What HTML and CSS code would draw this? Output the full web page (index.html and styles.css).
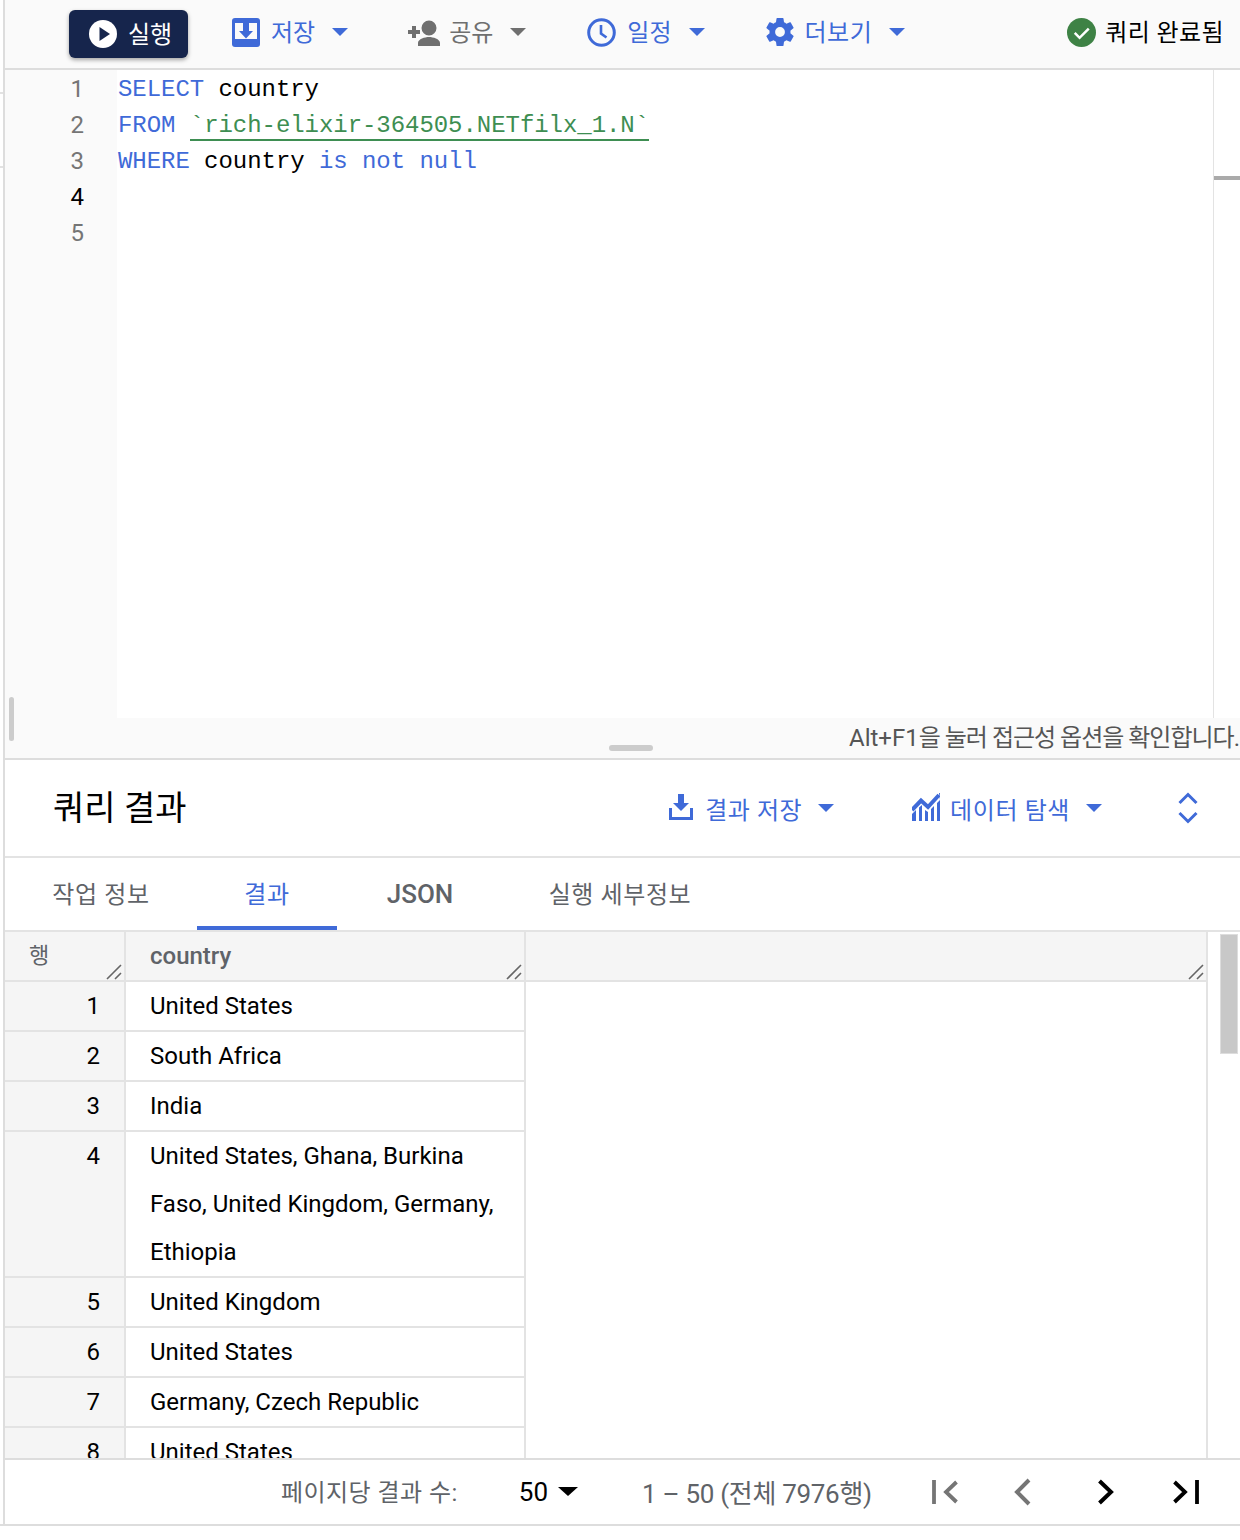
FILE: index.html
```html
<!DOCTYPE html>
<html lang="ko">
<head>
<meta charset="utf-8">
<title>쿼리 결과</title>
<link rel="stylesheet" href="styles.css">
</head>
<body>
<div class="page">
  <div class="rail"><i></i><i></i></div>
  <div class="app">
    <header class="toolbar">
      <button class="run"><svg class="ic30" viewBox="0 0 30 30"><circle cx="15" cy="15" r="14" fill="#fff"/><path d="M11.500 8 22 15l-10.500 7z" fill="#16254c"/></svg><span>실행</span></button>
      <div class="tool t-save"><svg class="ic-save" viewBox="0 0 28 29"><rect width="28" height="29" rx="3" fill="#3f6ad8"/><rect x="3" y="5" width="22" height="16" fill="#fafafa"/><path fill="#3f6ad8" d="M11 0h6v13h4l-7 7.500L7 13h4z"/></svg><span>저장</span><i class="caret"></i></div>
      <div class="tool grey t-share"><svg class="ic-share" viewBox="0 0 33 27"><path fill="#6f6f6f" d="M21 16.500a7.500 7.500 0 1 0 0-15 7.500 7.500 0 0 0 0 15zM21 18c-4 0-11 2-11 6v3h22v-3c0-4-7-6-11-6zM4 7v4H0v4h4v4h4v-4h4v-4H8V7z"/></svg><span>공유</span><i class="caret"></i></div>
      <div class="tool t-sched"><svg class="ic-clock" viewBox="0 0 29 29"><circle cx="14.500" cy="14.500" r="12.800" fill="none" stroke="#3f6ad8" stroke-width="3"/><path d="M14 7v8.500l5.500 4" fill="none" stroke="#3f6ad8" stroke-width="2.600"/></svg><span>일정</span><i class="caret"></i></div>
      <div class="tool t-more"><svg class="ic-gear" viewBox="2 2 20 20"><path fill="#3f6ad8" d="M19.430 12.980c.04-.32.07-.64.07-.98s-.03-.66-.07-.98l2.110-1.650c.19-.15.24-.42.12-.64l-2-3.460c-.12-.22-.39-.3-.61-.22l-2.490 1c-.52-.4-1.080-.73-1.690-.98l-.38-2.650A.49.490 0 0 0 14 2h-4c-.25 0-.46.180-.49.420l-.38 2.650c-.61.250-1.170.590-1.690.980l-2.490-1c-.23-.09-.49 0-.61.220l-2 3.460c-.13.220-.07.490.12.640l2.110 1.650c-.04.320-.07.650-.07.980s.03.660.07.980l-2.110 1.650c-.19.150-.24.420-.12.640l2 3.460c.12.220.39.300.61.220l2.490-1c.52.400 1.080.730 1.690.980l.38 2.650c.03.240.24.420.49.420h4c.25 0 .46-.180.49-.420l.38-2.650c.61-.250 1.170-.590 1.690-.980l2.490 1c.23.090.49 0 .61-.220l2-3.460c.12-.220.07-.490-.12-.640zM12 15.500a3.500 3.500 0 1 1 0-7 3.500 3.500 0 0 1 0 7z"/></svg><span>더보기</span><i class="caret"></i></div>
      <div class="status"><svg class="ic-clock" viewBox="0 0 30 30"><circle cx="15" cy="15" r="15" fill="#3e8245"/><path d="M8 15.500l5 5L22.500 11" fill="none" stroke="#fff" stroke-width="2.600"/></svg><span>쿼리 완료됨</span></div>
    </header>

    <section class="editor">
      <div class="gutter"><div>1</div><div>2</div><div>3</div><div class="cur">4</div><div>5</div><i class="vthumb"></i></div>
      <div class="code">
        <div class="ln"><b>SELECT</b> country</div>
        <div class="ln"><b>FROM</b> <span class="str">`rich-elixir-364505.NETfilx_1.N`</span></div>
        <div class="ln"><b>WHERE</b> country <b>is not null</b></div>
      </div>
      <div class="minimap"><i></i></div>
    </section>
    <div class="hint"><i class="hthumb"></i><span>Alt+F1<span class="tight">을 눌러 접근성 옵션을 확인합니다.</span></span></div>

    <div class="res-head">
      <h2>쿼리 결과</h2>
      <div class="act a-save"><svg class="ic-dl" viewBox="0 0 24 26"><path fill="#3f6ad8" d="M9 0h6v9h5l-8 8-8-8h5zM0 14h3v9h18v-9h3v12H0z"/></svg><span>결과 저장</span><i class="caret"></i></div>
      <div class="act a-explore"><svg class="ic-chart" viewBox="0 0 28 28"><path d="M0 17 9 7.500l7 6.500L27 2" fill="none" stroke="#3f6ad8" stroke-width="4"/><path fill="#3f6ad8" d="M27 0h1v7zM0 21l4-4v11H0zM7 14.500l3-2.500V28H7zM13 17l3 2v9h-3zM19 16l3-3v15h-3zM25 10l3-3v21h-3z"/></svg><span>데이터 탐색</span><i class="caret"></i></div>
      <svg class="unfold" viewBox="0 0 22 32"><path d="M2.500 11 11 2.500 19.500 11M2.500 21l8.500 8.500L19.500 21" fill="none" stroke="#3f6ad8" stroke-width="3"/></svg>
    </div>

    <nav class="tabs">
      <div class="tab t1">작업 정보</div>
      <div class="tab t2 on">결과</div>
      <div class="tab t3 strong">JSON</div>
      <div class="tab t4">실행 세부정보</div>
    </nav>

    <div class="results">
      <div class="grid">
        <div class="row hdr">
          <div class="num">행<svg class="grip" viewBox="0 0 16 16"><path d="M1 15 15 1M9 15l6-6"/></svg></div>
          <div class="val">country<svg class="grip" viewBox="0 0 16 16"><path d="M1 15 15 1M9 15l6-6"/></svg></div>
          <div class="rest"><svg class="grip" viewBox="0 0 16 16"><path d="M1 15 15 1M9 15l6-6"/></svg></div>
        </div>
        <div class="row"><div class="num">1</div><div class="val">United States</div></div>
        <div class="row"><div class="num">2</div><div class="val">South Africa</div></div>
        <div class="row"><div class="num">3</div><div class="val">India</div></div>
        <div class="row"><div class="num">4</div><div class="val">United States, Ghana, Burkina Faso, United Kingdom, Germany, Ethiopia</div></div>
        <div class="row"><div class="num">5</div><div class="val">United Kingdom</div></div>
        <div class="row"><div class="num">6</div><div class="val">United States</div></div>
        <div class="row"><div class="num">7</div><div class="val">Germany, Czech Republic</div></div>
        <div class="row"><div class="num">8</div><div class="val">United States</div></div>
      </div>
      <div class="sb"><i></i></div>
    </div>

    <footer class="pager">
      <span class="lbl">페이지당 결과 수:</span>
      <span class="size">50</span><i class="caret dark"></i>
      <span class="range">1 – 50 (전체 7976행)</span>
      <svg class="p1" viewBox="0 0 26 24"><path d="M2 0v24M24.500 2 14 12l10.500 10" stroke="#757575" stroke-width="3.800" fill="none"/></svg>
      <svg class="p2" viewBox="0 0 18 28"><path d="M16 2 4 14l12 12" stroke="#757575" stroke-width="4" fill="none"/></svg>
      <svg class="p3" viewBox="0 0 18 26"><path d="M2.500 2 14 13 2.500 24" stroke="#000" stroke-width="4" fill="none"/></svg>
      <svg class="p4" viewBox="0 0 26 24"><path d="M1.500 2 12 12 1.500 22M24 0v24" stroke="#000" stroke-width="3.800" fill="none"/></svg>
    </footer>
  </div>
</div>
</body>
</html>
```
FILE: styles.css
```css
* { box-sizing: border-box; }
html, body { margin: 0; padding: 0; background: #fff; }
body { font-family: Roboto, "Noto Sans CJK KR", sans-serif; font-size: 24px; color: #000; }
i { display: block; }
button { font: inherit; }

.page { width: 1240px; height: 1526px; border-bottom: 2px solid #ddd; overflow: hidden; display: flex; }
.rail { width: 3px; flex: none; padding-top: 92px; }
.rail i { height: 2px; background: #e2e2e2; margin-bottom: 72px; }
.app { flex: 1; min-width: 0; height: 1524px; border-left: 2px solid #ddd; display: flex; flex-direction: column; }

.toolbar { height: 70px; flex: none; background: #fafafa; border-bottom: 2px solid #ddd; display: flex; align-items: center; padding: 0 17px 4px 64px; color: #3f6ad8; }
.ic30 { width: 30px; height: 30px; flex: none; display: block; }
.ic-save { width: 28px; height: 29px; flex: none; display: block; }
.ic-share { width: 33px; height: 27px; flex: none; display: block; }
.ic-clock { width: 29px; height: 29px; flex: none; display: block; }
.ic-gear { width: 28px; height: 28px; flex: none; display: block; }
.run { width: 119px; height: 48px; background: #16254c; color: #fff; border: 0; border-radius: 6px; display: flex; align-items: center; gap: 10px; padding: 0 0 0 19px; box-shadow: 0 2px 4px rgba(0,0,0,.35); margin-top: 4px; }
.run span { padding-bottom: 3px; }
.tool { display: flex; align-items: center; gap: 11px; }
.tool span { padding-bottom: 4px; }
.tool .caret { margin-left: 6px; margin-bottom: 1px; }
.grey { color: #6f6f6f; }
.caret { width: 0; height: 0; border-left: 8px solid transparent; border-right: 8px solid transparent; border-top: 8px solid #3f6ad8; flex: none; }
.grey .caret { border-top-color: #6f6f6f; }
.t-save { margin-left: 44px; }
.t-share { margin-left: 60px; gap: 8px; }
.t-share .caret { margin-left: 9px; }
.t-sched { margin-left: 61px; }
.t-more { margin-left: 61px; }
.t-more span { letter-spacing: .5px; }
.status { margin-left: auto; display: flex; align-items: center; gap: 9px; color: #000; }
.status span { padding-bottom: 4px; letter-spacing: .4px; margin-right: -1px; }

.editor { height: 648px; flex: none; display: flex; background: #fff; }
.gutter { width: 112px; flex: none; background: #fafafa; color: #757575; font-size: 24px; line-height: 36px; padding-top: 1px; padding-right: 33px; text-align: right; position: relative; }
.gutter .cur { color: #000; }
.vthumb { position: absolute; left: 4px; top: 627px; width: 5px; height: 44px; background: #ccc; border-radius: 3px; z-index: 1; }
.code { flex: 1; padding: 2px 0 0 1px; font-family: "Liberation Mono", monospace; font-size: 24px; line-height: 36px; letter-spacing: -0.05px; }
.ln { white-space: pre; height: 36px; }
.code b { font-weight: 400; color: #3f6ad8; }
.str { display: inline-block; line-height: 27px; color: #3e8e52; border-bottom: 2px solid #3e8e52; }
.minimap { width: 27px; flex: none; border-left: 1px solid #e3e3e3; position: relative; }
.minimap i { position: absolute; left: 0; right: 0; top: 106px; height: 4px; background: #aaa; }

.hint { height: 42px; flex: none; background: #fafafa; border-bottom: 2px solid #ddd; display: flex; justify-content: flex-end; align-items: center; color: #555; position: relative; white-space: nowrap; }
.hthumb { position: absolute; left: 604px; top: 27px; width: 44px; height: 6px; background: #ccc; border-radius: 3px; }
.hint > span { margin-right: 1px; padding-bottom: 5px; }
.tight { letter-spacing: -1px; }

.res-head { height: 98px; flex: none; border-bottom: 2px solid #e3e3e3; display: flex; align-items: center; padding: 0 0 0 48px; color: #3f6ad8; }
.res-head h2 { margin: 0 auto 0 0; padding-bottom: 6px; font-size: 34px; font-weight: 400; color: #000; }
.act { display: flex; align-items: center; }
.act .caret { margin-left: 16px; }
.a-save span { margin-left: 12px; letter-spacing: .5px; }
.a-explore { margin-left: 78px; }
.a-explore span { margin-left: 10px; letter-spacing: .6px; }
.ic-dl { width: 24px; height: 26px; flex: none; display: block; margin-top: -3px; }
.ic-chart { width: 28px; height: 28px; flex: none; display: block; margin-top: -2px; }
.unfold { width: 22px; height: 32px; margin-left: 75px; margin-right: 41px; display: block; }

.tabs { height: 74px; flex: none; border-bottom: 2px solid #e3e3e3; display: flex; color: #5f6368; }
.tab { height: 72px; display: flex; align-items: center; justify-content: center; padding-bottom: 4px; letter-spacing: .6px; }
.t1 { width: 192px; }
.t2 { width: 140px; color: #3f6ad8; border-bottom: 4px solid #3f6ad8; padding-bottom: 0; }
.t3 { width: 166px; }
.strong { font-weight: 500; font-size: 26px; letter-spacing: 0; padding-bottom: 0; }
.t4 { width: 234px; }

.results { height: 526px; flex: none; display: flex; overflow: hidden; }
.grid { width: 1203px; flex: none; border-right: 2px solid #e3e3e3; height: 100%; overflow: hidden; }
.row { display: flex; width: 521px; border-bottom: 2px solid #e3e3e3; line-height: 48px; }
.num { width: 121px; flex: none; background: #f5f5f5; border-right: 2px solid #e3e3e3; text-align: right; padding-right: 24px; position: relative; }
.val { width: 400px; flex: none; border-right: 2px solid #e3e3e3; padding: 0 24px; position: relative; }
.hdr { width: 1201px; background: #f5f5f5; color: #5f6368; font-weight: 500; }
.hdr .num { text-align: left; padding-left: 24px; font-weight: 400; font-size: 22px; }
.rest { flex: 1; position: relative; }
.grip { position: absolute; right: 2px; bottom: 0; width: 16px; height: 16px; display: block; fill: none; stroke: #666; stroke-width: 1.600; }
.sb { flex: 1; position: relative; }
.sb i { position: absolute; left: 12px; top: 2px; width: 18px; height: 120px; background: #c8c8c8; border: 1px solid #ddd; }

.pager { flex: 1; border-top: 2px solid #ddd; display: flex; align-items: center; color: #5f6368; }
.lbl { margin-left: 276px; letter-spacing: .45px; padding-bottom: 4px; }
.size { margin-left: 61px; color: #000; font-size: 26px; }
.caret.dark { border-top-color: #000; border-left-width: 10px; border-right-width: 10px; border-top-width: 9px; margin-left: 10px; margin-top: -2px; }
.range { margin-left: 64px; font-size: 26px; padding-bottom: 2px; letter-spacing: -.3px; }
.p1, .p4 { width: 26px; height: 24px; display: block; flex: none; }
.p2 { width: 18px; height: 28px; display: block; flex: none; }
.p3 { width: 18px; height: 26px; display: block; flex: none; }
.p1 { margin-left: 60px; }
.p2 { margin-left: 55px; }
.p3 { margin-left: 66px; }
.p4 { margin-left: 58px; }
```
